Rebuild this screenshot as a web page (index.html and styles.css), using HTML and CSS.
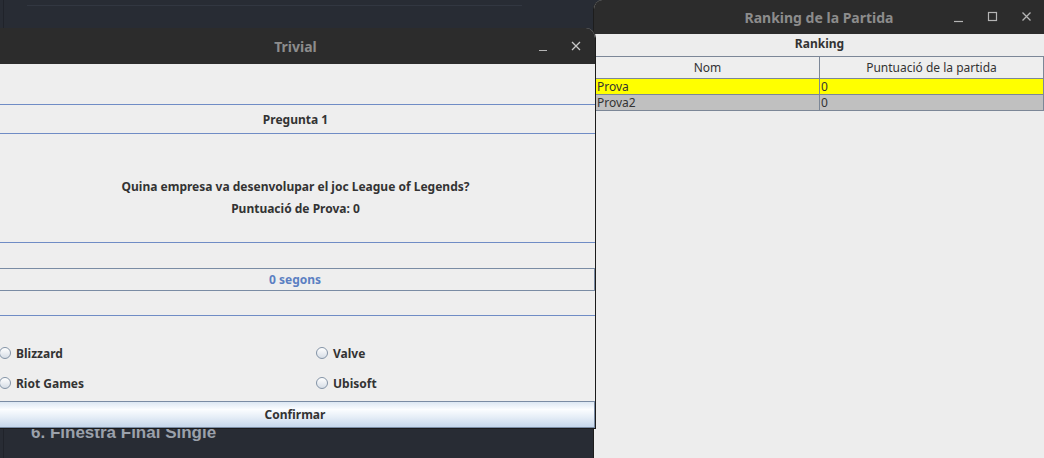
FILE: index.html
```html
<!DOCTYPE html>
<html>
<head>
<meta charset="utf-8">
<link rel="stylesheet" href="styles.css">
</head>
<body>
<div class="desktop">
  <div class="bg-rule"></div>
  <div class="bg-edge"></div>
  <div class="bg-heading">6. Finestra Final Single</div>

  <div class="win ranking">
    <div class="titlebar rk-title">
      <span class="title">Ranking de la Partida</span>
      <div class="ctrls">
        <svg class="ctrl" width="14" height="14" viewBox="0 0 14 14"><path d="M2 11.5h9" stroke="#b5b5b5" stroke-width="1.2"/></svg>
        <svg class="ctrl" width="14" height="14" viewBox="0 0 14 14"><rect x="2.5" y="2.5" width="8" height="8" fill="none" stroke="#b5b5b5" stroke-width="1.2"/></svg>
        <svg class="ctrl" width="14" height="14" viewBox="0 0 14 14"><path d="M2.5 2.5l8 8M10.5 2.5l-8 8" stroke="#b5b5b5" stroke-width="1.3"/></svg>
      </div>
    </div>
    <div class="rk-body">
      <div class="rk-caption">Ranking</div>
      <table class="rk-table">
        <thead>
          <tr><th>Nom</th><th>Puntuació de la partida</th></tr>
        </thead>
        <tbody>
          <tr class="row-first"><td>Prova</td><td>0</td></tr>
          <tr class="row-second"><td>Prova2</td><td>0</td></tr>
        </tbody>
      </table>
    </div>
  </div>

  <div class="win trivial">
    <div class="titlebar tv-title">
      <span class="title">Trivial</span>
      <div class="ctrls tv-ctrls">
        <svg class="ctrl" width="14" height="14" viewBox="0 0 14 14"><path d="M3 11.5h8" stroke="#b5b5b5" stroke-width="1.2"/></svg>
        <svg class="ctrl" width="14" height="14" viewBox="0 0 14 14"><path d="M3 3l8 8M11 3l-8 8" stroke="#c8c8c8" stroke-width="1.3"/></svg>
      </div>
    </div>
    <div class="tv-body">
      <div class="sp-top"></div>
      <div class="sec-pregunta">Pregunta 1</div>
      <div class="sec-question">
        <p>Quina empresa va desenvolupar el joc League of Legends?</p>
        <p>Puntuació de Prova: 0</p>
      </div>
      <div class="sec-timer">
        <div class="timer-box">0 segons</div>
      </div>
      <div class="sec-options">
        <label class="opt"><span class="radio"></span>Blizzard</label>
        <label class="opt"><span class="radio"></span>Valve</label>
        <label class="opt"><span class="radio"></span>Riot Games</label>
        <label class="opt"><span class="radio"></span>Ubisoft</label>
      </div>
      <div class="btn-confirm">Confirmar</div>
    </div>
  </div>
</div>
</body>
</html>
```

FILE: styles.css
```css
* { box-sizing: border-box; }
html, body { margin: 0; padding: 0; }
body {
  width: 1044px;
  height: 458px;
  overflow: hidden;
  background: #282c34;
  font-family: "Noto Sans", "DejaVu Sans", sans-serif;
}
.desktop {
  position: relative;
  width: 1044px;
  height: 458px;
}
.bg-rule {
  position: absolute;
  left: 27px;
  top: 5px;
  width: 495px;
  height: 1px;
  background: #323741;
}
.bg-edge {
  position: absolute;
  left: 3px;
  top: 0;
  width: 1px;
  height: 458px;
  background: #20232a;
}
.bg-heading {
  position: absolute;
  left: 31px;
  top: 423px;
  font-family: "Liberation Sans", Arial, sans-serif;
  font-weight: bold;
  font-size: 17px;
  color: #9ba1ab;
}

.win { position: absolute; }
.titlebar {
  position: relative;
  background: #2c2c2c;
  display: flex;
  align-items: center;
  justify-content: center;
}
.title {
  font-weight: bold;
  font-size: 14px;
  color: #8c8c8c;
}
.ctrls {
  position: absolute;
  top: 0;
  bottom: 0;
  right: 10px;
  display: flex;
  align-items: center;
  gap: 20px;
}
.ctrl { display: block; }

/* Ranking window */
.ranking {
  left: 593px;
  top: 0;
  width: 451px;
  height: 458px;
  background: #ededed;
  border-left: 1px solid #1d1d1d;
  border-top-left-radius: 9px;
  overflow: hidden;
}
.rk-title { height: 34px; }
.rk-body {
  padding: 0 0 0 1px;
}
.rk-caption {
  height: 22px;
  text-align: center;
  font-weight: bold;
  font-size: 12px;
  line-height: 20px;
  color: #333;
}
.rk-table {
  width: 100%;
  border-collapse: collapse;
  font-size: 12px;
  color: #333;
}
.rk-table th, .rk-table td {
  border: 1px solid #7c8797;
  padding: 0 1px;
  font-weight: normal;
  width: 50%;
}
.rk-table th {
  height: 22px;
  text-align: center;
  background: #eeeeee;
  color: #333;
}
.rk-table td {
  height: 16px;
  line-height: 14px;
  text-align: left;
}
.row-first td { background: #ffff00; }
.row-second td { background: #c0c0c0; }

/* Trivial window */
.trivial {
  left: -4px;
  top: 28px;
  width: 600px;
  height: 401px;
  background: #eeeeee;
  border-right: 1px solid #1b1b1b;
  border-bottom: 1px solid #1b1b1b;
  border-top-right-radius: 10px;
  overflow: hidden;
}
.tv-title { height: 36px; }
.tv-ctrls { right: 12px; gap: 19px; }
.tv-body {
  display: flex;
  flex-direction: column;
  font-weight: bold;
  font-size: 12px;
  color: #333;
}
.sp-top { height: 40px; }
.sec-pregunta {
  height: 30px;
  border-top: 1px solid #6f8cc5;
  border-bottom: 1px solid #6f8cc5;
  display: flex;
  align-items: center;
  justify-content: center;
}
.sec-question {
  height: 109px;
  border-bottom: 1px solid #6f8cc5;
  display: flex;
  flex-direction: column;
  justify-content: flex-start;
  align-items: center;
  gap: 6px;
  padding-top: 45px;
}
.sec-question p { margin: 0; line-height: 16px; }
.sec-timer {
  height: 73px;
  border-bottom: 1px solid #6f8cc5;
  padding-top: 25px;
}
.timer-box {
  height: 23px;
  border: 1px solid #7a8ca4;
  border-left: none;
  display: flex;
  align-items: center;
  justify-content: center;
  color: #5b7fc2;
}
.sec-options {
  height: 85px;
  display: grid;
  grid-template-columns: 317px 1fr;
  grid-template-rows: 30px 30px;
  align-content: start;
  padding-left: 3px;
  padding-top: 22px;
}
.opt {
  display: flex;
  align-items: center;
  gap: 5px;
}
.radio {
  width: 12px;
  height: 12px;
  border-radius: 50%;
  border: 1px solid #8393a6;
  background: linear-gradient(#ffffff, #d6dde6);
}
.btn-confirm {
  height: 27px;
  border: 1px solid #7a8ca4;
  border-left: none;
  background: linear-gradient(#dce7f3 0%, #fbfdff 30%, #e6eef7 60%, #c6d7ea 100%);
  display: flex;
  align-items: center;
  justify-content: center;
  color: #333;
}
```
